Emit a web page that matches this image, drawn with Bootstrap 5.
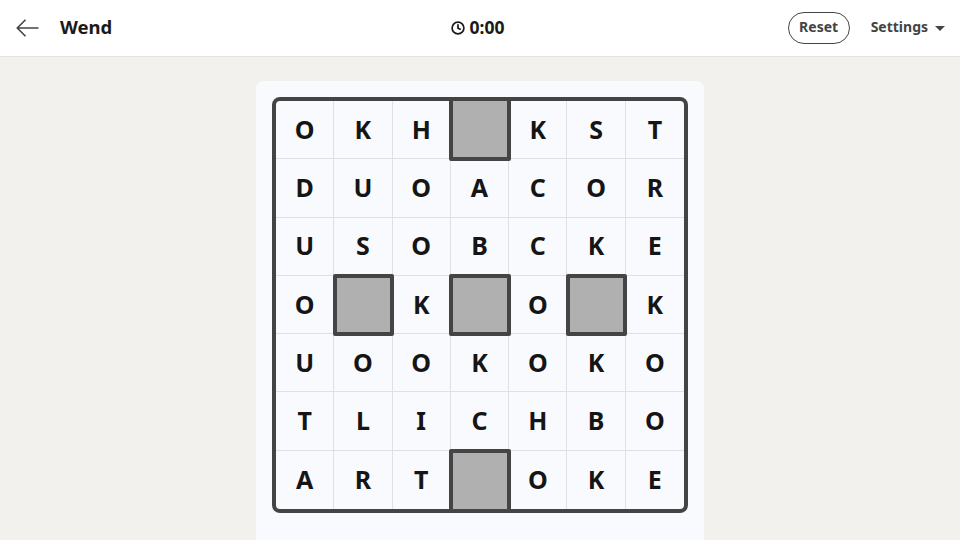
<!DOCTYPE html>
<html lang="en">
<head>
<meta charset="utf-8">
<title>Wend</title>
<link href="https://cdn.jsdelivr.net/npm/bootstrap@5.3.0/dist/css/bootstrap.min.css" rel="stylesheet">
<style>
html,body{height:540px;overflow:hidden}
body{background:#f2f1ed;font-family:"Noto Sans","Open Sans",sans-serif;color:#1a1a1a}
.topbar{height:57px;background:#fff;border-bottom:1px solid #e4e3e0;padding:0 16px}
.side{flex:1 1 0}
.back-link{display:flex;color:#444;margin-right:20px}
.game-name{font-size:18.5px;font-weight:700;color:#1a1a1a;line-height:1;padding-bottom:2px}
.timer{font-size:17.5px;font-weight:700;gap:5px;color:#1a1a1a;margin-right:5px;padding-bottom:1px}
.reset-btn{font-size:14px;font-weight:700;color:#444;border:1px solid #444;border-radius:16px;padding:0 0 2px;width:62px;height:32px;background:#fff;line-height:28px}
.settings-btn{font-size:14px;font-weight:700;color:#444;background:none;border:0;padding:0 0 4px;margin-left:20px;margin-right:-1px}
.settings-btn::after{margin-left:7px;vertical-align:1px;border-top-width:5px;border-left-width:5px;border-right-width:5px}
.reset-btn{margin-right:1px}
.board-card{width:448px;margin:24px auto 0;background:#f9fafd;border-radius:8px;padding:16px 16px 40px}
.board{display:grid;grid-template-columns:repeat(7,1fr);grid-auto-rows:58.28px;border:4px solid #444;border-radius:8px;width:416px}
.tile{display:flex;align-items:center;justify-content:center;font-size:25px;font-weight:700;color:#151515;border-right:1px solid #dfe0e5;border-bottom:1px solid #dfe0e5;position:relative}
.tile.last-col{border-right:0}
.tile.last-row{border-bottom:0}
.tile.blocked::after{content:"";position:absolute;z-index:1;inset:-1.5px -2.5px -2.5px -1.5px;background:#b0b0b0;border:4px solid #444;border-radius:2px}
.tile.blocked.first-row::after{top:-4px}
.tile.blocked.last-row::after{bottom:-4px}
</style>
</head>
<body>
<header class="topbar d-flex align-items-center">
  <div class="side d-flex align-items-center">
    <a class="back-link" href="#" aria-label="Back">
      <svg width="24" height="18" viewBox="0 0 24 18" fill="none" stroke="#444" stroke-width="1.6"><path d="M22.5 9H1.5M9.5 .8 1.3 9 9.5 17.2"/></svg>
    </a>
    <span class="game-name">Wend</span>
  </div>
  <div class="timer d-flex align-items-center">
    <svg width="14" height="14" viewBox="0 0 14 14" fill="none" stroke="#1a1a1a" stroke-width="1.7"><circle cx="7" cy="7" r="5.9"/><path d="M7 3.2V7.3L9.8 8.6"/></svg>
    <span>0:00</span>
  </div>
  <div class="side d-flex align-items-center justify-content-end">
    <button class="btn reset-btn" type="button">Reset</button>
    <button class="settings-btn dropdown-toggle" type="button">Settings</button>
  </div>
</header>
<main class="board-card">
  <div class="board" id="b"></div>
</main>
<script>
var rows=["OKH#KST","DUOACOR","USOBCKE","O#K#O#K","UOOKOKO","TLICHBO","ART#OKE"],h="";
rows.forEach(function(r,y){r.split("").forEach(function(c,x){
  var k="tile"+(x==6?" last-col":"")+(y==0?" first-row":"")+(y==6?" last-row":"")+(c=="#"?" blocked":"");
  h+='<div class="'+k+'">'+(c=="#"?"":c)+'</div>';
});});
document.getElementById("b").innerHTML=h;
</script>
<script src="https://cdn.jsdelivr.net/npm/bootstrap@5.3.0/dist/js/bootstrap.bundle.min.js"></script>
</body>
</html>
